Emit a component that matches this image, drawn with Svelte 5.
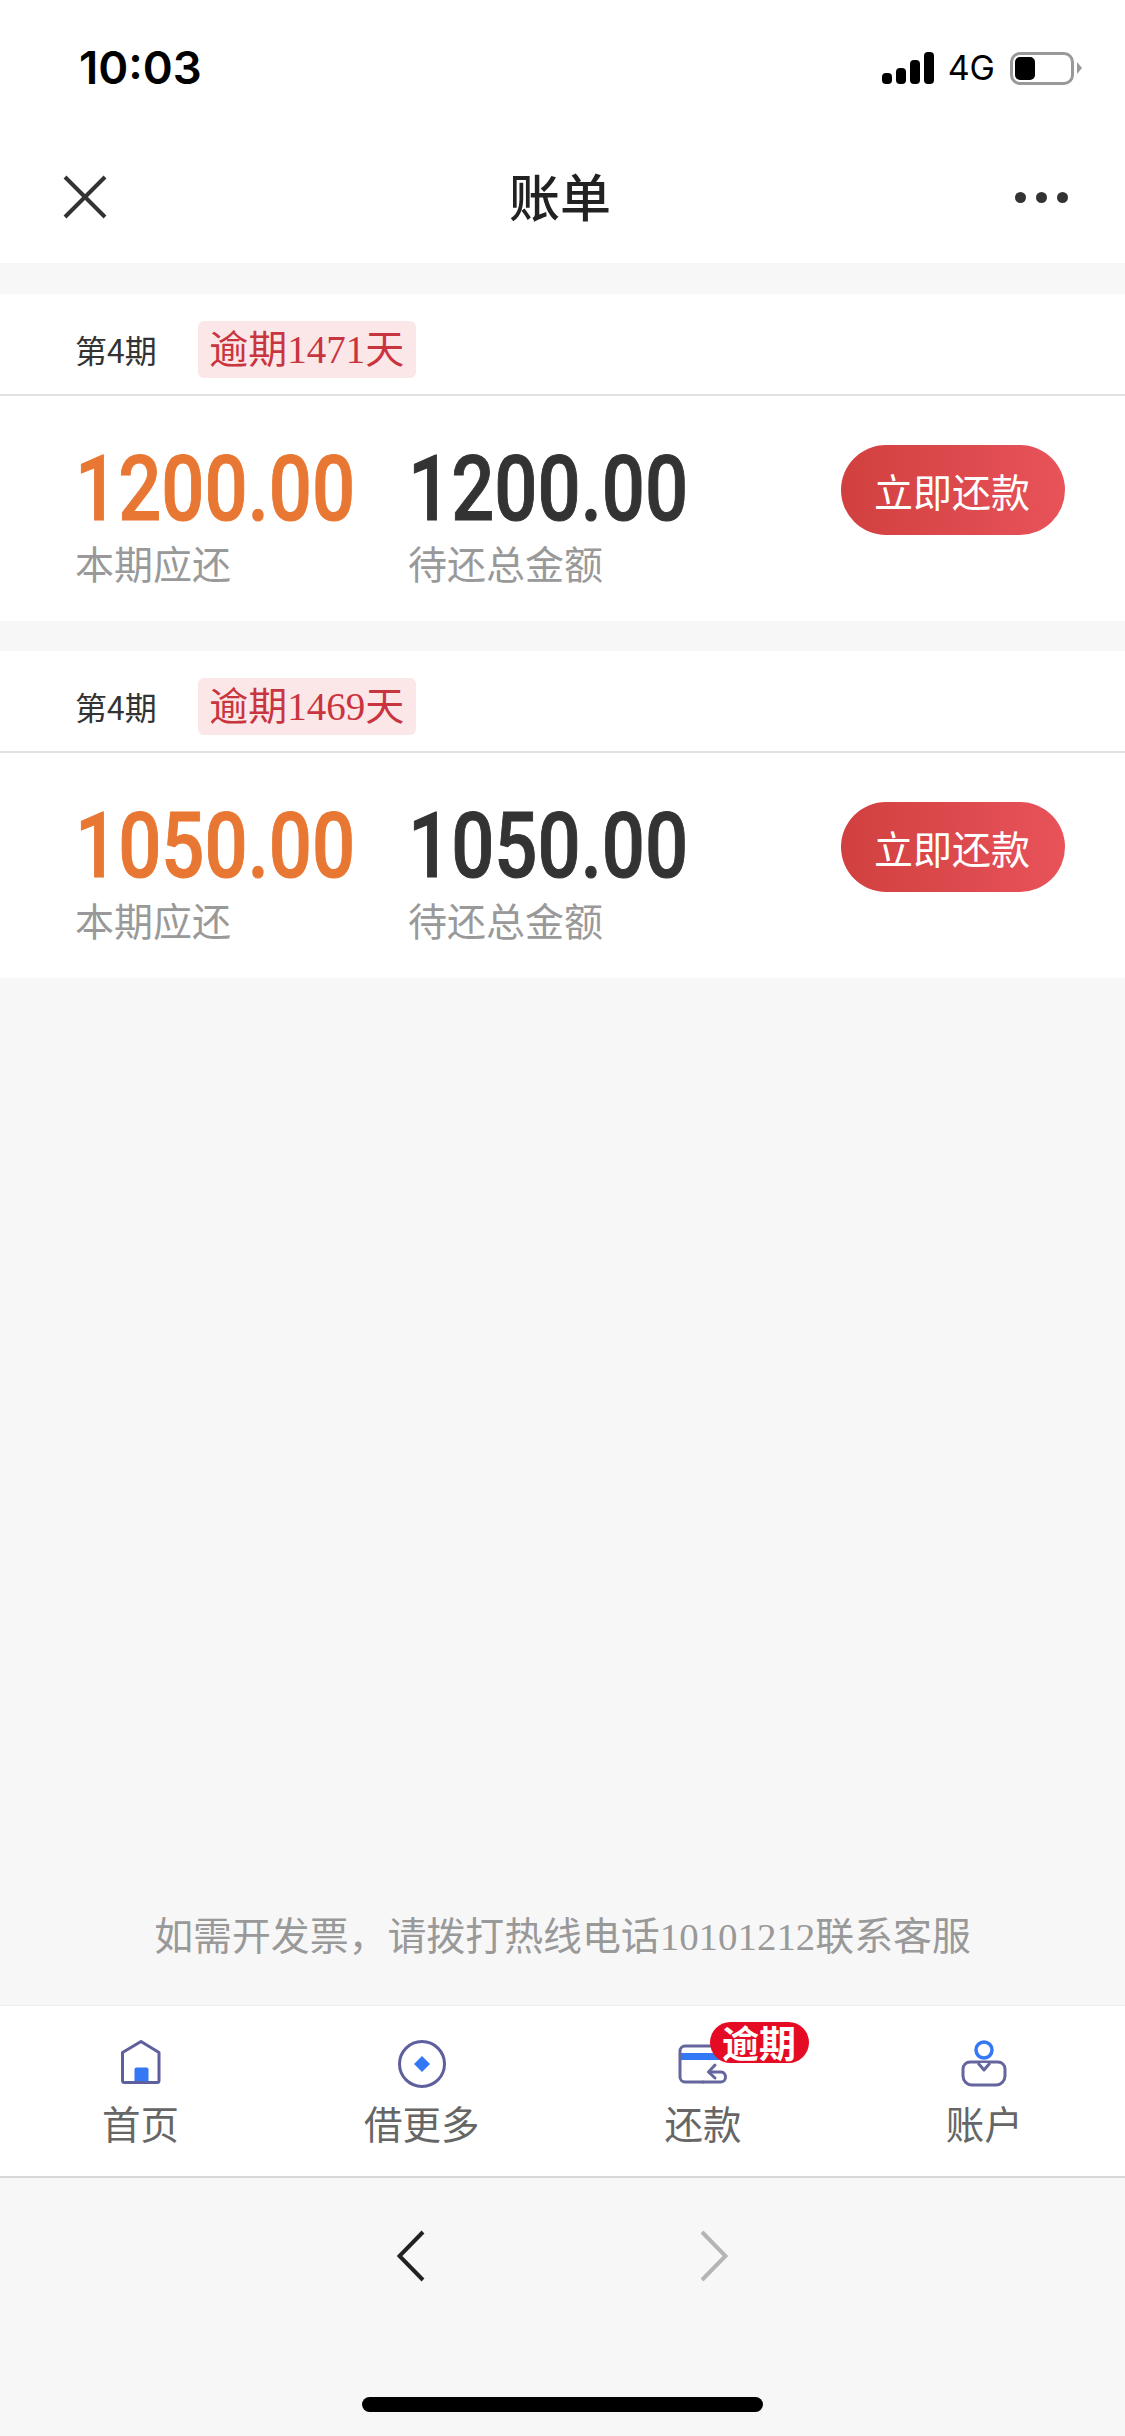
<script>
  const bills = [
    { days: 1471, amount: '1200.00' },
    { days: 1469, amount: '1050.00' }
  ];
</script>

<div class="page">
  <header class="top">
    <div class="status">
      <span class="time">10:03</span>
      <div class="status-right">
        <div class="signal"><i class="b1"></i><i class="b2"></i><i class="b3"></i><i class="b4"></i></div>
        <span class="net">4G</span>
        <div class="battery"><div class="cell"><i></i></div><b></b></div>
      </div>
    </div>
    <div class="nav">
      <svg class="close" width="44" height="44" viewBox="0 0 44 44"><path d="M2 2L42 42M42 2L2 42" stroke="#333" stroke-width="4" fill="none"/></svg>
      <h1>账单</h1>
      <div class="dots"><i></i><i></i><i></i></div>
    </div>
  </header>

  <main class="main">
    {#each bills as bill}
      <section class="card">
        <div class="card-head">
          <span class="period">第4期</span>
          <span class="tag">逾期{bill.days}天</span>
        </div>
        <div class="card-body">
          <div class="col first">
            <div class="amount orange"><span>{bill.amount}</span></div>
            <div class="label">本期应还</div>
          </div>
          <div class="col">
            <div class="amount"><span>{bill.amount}</span></div>
            <div class="label">待还总金额</div>
          </div>
          <button class="pay">立即还款</button>
        </div>
      </section>
    {/each}
    <p class="note">如需开发票，请拨打热线电话10101212联系客服</p>
  </main>

  <nav class="tabs">
    <div class="tab">
      <svg width="60" height="60" viewBox="0 0 60 60">
        <path d="M11.5 17.5L30 6.5L48 17.5V45.5a2 2 0 0 1-2 2H13.500a2 2 0 0 1-2-2Z" fill="none" stroke="#5d5f9e" stroke-width="3" stroke-linejoin="round"/>
        <path d="M23.500 34.500a2 2 0 0 1 2-2h10a2 2 0 0 1 2 2V46h-14Z" fill="#3478f6"/>
      </svg>
      <span>首页</span>
    </div>
    <div class="tab">
      <svg width="60" height="60" viewBox="0 0 60 60">
        <circle cx="30" cy="29" r="22.500" fill="none" stroke="#5d5f9e" stroke-width="3"/>
        <path d="M30 21L38 29L30 37L22 29Z" fill="#3478f6"/>
      </svg>
      <span>借更多</span>
    </div>
    <div class="tab">
      <svg width="60" height="60" viewBox="0 0 60 60">
        <path d="M30 47H12a5 5 0 0 1-5-5V16a5 5 0 0 1 5-5H40" fill="none" stroke="#66669f" stroke-width="3" stroke-linecap="round"/>
        <path d="M30 47H48c6 0 6-10 0-10H36" fill="none" stroke="#66669f" stroke-width="3" stroke-linecap="round"/>
        <path d="M42 30L35.500 37L42 43" fill="none" stroke="#66669f" stroke-width="3" stroke-linecap="round" stroke-linejoin="round"/>
        <rect x="8" y="18" width="40" height="7" fill="#3478f6"/>
      </svg>
      <span>还款</span>
      <em class="badge">逾期</em>
    </div>
    <div class="tab">
      <svg width="60" height="60" viewBox="0 0 60 60">
        <circle cx="30" cy="15" r="8" fill="none" stroke="#3478f6" stroke-width="3.500"/>
        <path d="M16 27H44a7 7 0 0 1 7 7V41a9 9 0 0 1-9 9H18a9 9 0 0 1-9-9V34a7 7 0 0 1 7-7Z" fill="none" stroke="#66669f" stroke-width="3"/>
        <path d="M24 28L30 35L36 28" fill="#fff" stroke="#66669f" stroke-width="3" stroke-linejoin="round"/>
      </svg>
      <span>账户</span>
    </div>
  </nav>

  <footer class="browser">
    <div class="arrows">
      <svg width="28" height="52" viewBox="0 0 28 52"><path d="M26 2L2.500 26L26 50" fill="none" stroke="#222" stroke-width="4"/></svg>
      <svg width="28" height="52" viewBox="0 0 28 52"><path d="M2 2L25.500 26L2 50" fill="none" stroke="#b5b5b5" stroke-width="4"/></svg>
    </div>
    <div class="home-bar"></div>
  </footer>
</div>

<style>
  :global(body) {
    margin: 0;
    background: #f7f7f7;
  }
  .page {
    width: 1125px;
    height: 2436px;
    display: flex;
    flex-direction: column;
    background: #f7f7f7;
    font-family: "Liberation Serif", "Noto Sans CJK SC", serif;
    overflow: hidden;
  }
  .top {
    background: #fff;
    height: 263px;
  }
  .status {
    height: 131px;
    display: flex;
    justify-content: space-between;
    align-items: flex-start;
    padding: 42px 43px 0 79px;
    box-sizing: border-box;
  }
  .time {
    font: 600 45.500px/52px Inter, sans-serif;
    color: #000;
  }
  .status-right {
    display: flex;
    align-items: center;
    height: 52px;
  }
  .signal {
    display: flex;
    align-items: flex-end;
    gap: 4px;
    height: 32px;
  }
  .signal i {
    width: 10px;
    border-radius: 4px;
    background: #000;
  }
  .b1 { height: 11px; }
  .b2 { height: 16px; }
  .b3 { height: 24px; }
  .b4 { height: 32px; }
  .net {
    font: 400 34px/40px Inter, sans-serif;
    color: #000;
    margin: 0 15px 0 14px;
  }
  .battery {
    display: flex;
    align-items: center;
    gap: 3px;
  }
  .cell {
    width: 64px;
    height: 33px;
    box-sizing: border-box;
    border: 3px solid #999;
    border-radius: 10px;
    padding: 2px;
  }
  .cell i {
    display: block;
    width: 20px;
    height: 100%;
    border-radius: 5px;
    background: #000;
  }
  .battery b {
    width: 5px;
    height: 12px;
    background: #999;
    clip-path: polygon(0 0, 100% 50%, 0 100%);
  }
  .nav {
    height: 132px;
    display: flex;
    align-items: center;
    justify-content: space-between;
    padding: 0 57px 0 63px;
    box-sizing: border-box;
  }
  .nav h1 {
    margin: -4px 0 0 -2px;
    font: 500 51px/60px "Noto Sans CJK SC", sans-serif;
    color: #222;
  }
  .dots {
    display: flex;
    gap: 10px;
  }
  .dots i {
    width: 11px;
    height: 11px;
    border-radius: 50%;
    background: #333;
  }
  .main {
    flex: 1;
    display: flex;
    flex-direction: column;
    min-height: 0;
  }
  .card {
    background: #fff;
    margin: 31px 0 -1px;
    height: 327px;
  }
  .card-head {
    border-bottom: 2px solid #e2e2e2;
    display: flex;
    align-items: center;
    padding: 9px 0 0 75px;
    box-sizing: content-box;
    height: 91px;
    gap: 41px;
  }
  .period {
    font: 400 32px/44px "Noto Sans CJK SC", sans-serif;
    color: #333;
  }
  .tag {
    height: 57px;
    line-height: 57px;
    font-size: 39px;
    padding: 0 11.500px;
    margin-top: 1px;
    background: #fbe6e8;
    color: #c9353f;
    border-radius: 6px;
  }
  .card-body {
    display: flex;
    padding: 48px 60px 0 75px;
    height: 225px;
    box-sizing: border-box;
    position: relative;
  }
  .col {
    width: 333px;
  }
  .amount {
    height: 90px;
    line-height: 90px;
    font-family: Roboto, sans-serif;
    font-size: 91px;
    font-weight: 500;
    -webkit-text-stroke: 1px currentColor;
    color: #333;
  }
  .amount span {
    display: inline-block;
    transform: scaleX(0.835);
    transform-origin: left center;
  }
  .orange {
    color: #e87733;
  }
  .label {
    font: 400 39px/40px "Noto Sans CJK SC", sans-serif;
    color: #999;
    margin-top: 8px;
  }
  .pay {
    position: absolute;
    right: 60px;
    top: 49px;
    width: 224px;
    height: 90px;
    border: 0;
    border-radius: 45px;
    background: linear-gradient(90deg, #d1403f, #e8535a);
    color: #fff;
    font: 400 39px/90px "Noto Sans CJK SC", sans-serif;
    padding: 0 2px 0 0;
  }
  .note {
    margin: auto 0 34px;
    text-align: center;
    font-size: 38.900px;
    line-height: 68px;
    color: #999;
  }
  .tabs {
    background: #fff;
    height: 170px;
    display: grid;
    grid-template-columns: repeat(4, 1fr);
    border-top: 1px solid #eee;
    border-bottom: 2px solid #d8d8d8;
    flex: none;
  }
  .tab {
    position: relative;
    display: flex;
    flex-direction: column;
    align-items: center;
    padding-top: 29px;
  }
  .tab svg {
    display: block;
  }
  .tab span {
    margin-top: 7px;
    font: 400 38.500px/40px "Noto Sans CJK SC", sans-serif;
    color: #666;
  }
  .badge {
    position: absolute;
    left: 147px;
    top: 16px;
    width: 99px;
    height: 41px;
    border-radius: 21px;
    background: #e60b25;
    color: #fff;
    font: 700 37px/41px "Noto Sans CJK SC", sans-serif;
    text-align: center;
  }
  .browser {
    height: 258px;
    padding-top: 52px;
    box-sizing: border-box;
    flex: none;
  }
  .arrows {
    display: flex;
    gap: 275px;
    padding-left: 397px;
  }
  .home-bar {
    width: 401px;
    height: 15px;
    margin: 115px 0 0 362px;
    border-radius: 8px;
    background: #000;
  }
</style>
